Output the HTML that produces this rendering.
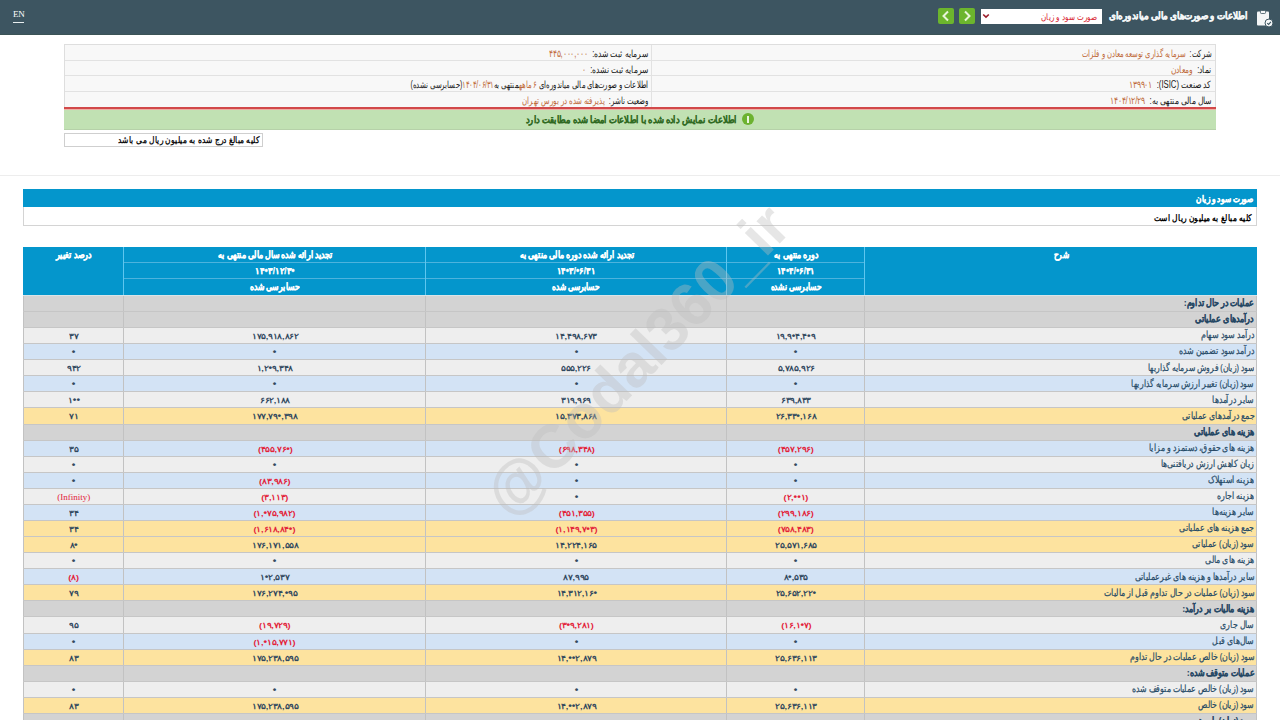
<!DOCTYPE html>
<html lang="fa">
<head>
<meta charset="utf-8">
<style>
*{box-sizing:border-box;margin:0;padding:0}
html,body{width:1280px;height:720px;overflow:hidden;background:#fff;font-family:"Liberation Sans",sans-serif;}
.t{display:inline-block;white-space:nowrap;direction:rtl}
.ar{position:absolute;transform-origin:100% 50%}
#hdr{position:absolute;left:0;top:0;width:1280px;height:35px;background:#3d5561;border-bottom:1px solid #3b5356}
#en{position:absolute;left:13px;top:8.5px;font-family:"Liberation Serif",serif;font-size:9px;color:#fff;line-height:11px;letter-spacing:-0.3px}
#enl{position:absolute;left:13px;top:22px;width:11px;height:1px;background:#e8eef0}
#T_title{right:31.6px;top:8.5px;font-size:10px;font-weight:bold;color:#f4f6f7;-webkit-text-stroke:0.35px #f4f6f7;line-height:14px;transform:scaleX(0.8816)}
#sel{position:absolute;left:981px;top:9px;width:121px;height:15px;background:#fff}
#T_sel{right:182.8px;top:9.5px;font-size:9px;color:#d8202c;line-height:15px;transform:scaleX(0.8041)}
.btn{position:absolute;top:8px;width:16px;height:16px;background:#6cb52d;border-radius:2px}
.btn svg{position:absolute;left:0;top:0}
#info{position:absolute;left:64px;top:44.3px;width:1152px;height:62.9px;background:#f8f8f8;border:1px solid #dedede;border-bottom:none}
.irow{position:absolute;left:0;width:1150px;height:15.5px;border-bottom:1px solid #e2e2e2}
.it{font-size:10px;color:#1a1a1a;line-height:14px}
.it span{color:#bf6a3a}
.it .v{margin-right:3px}
#redl{position:absolute;left:64px;top:107px;width:1152px;height:2px;background:#d2494a}
#pinkl{position:absolute;left:64px;top:109px;width:1152px;height:1px;background:#eeb1a6}
#green{position:absolute;left:64px;top:110px;width:1152px;height:19.5px;background:#c1e1b3;border-bottom:1px solid #b6d1a9}
#T_green{right:543px;top:112.5px;font-size:10px;font-weight:bold;color:#2f6a22;-webkit-text-stroke:0.15px #2f6a22;line-height:14px;transform:scaleX(0.8406)}
#gico{position:absolute;left:742px;top:113px;width:12px;height:12px;border-radius:50%;background:#6cb230}
#gico:after{content:"";position:absolute;left:5px;top:3px;width:2px;height:7px;background:#eaf5df}
#note{position:absolute;left:64px;top:133px;width:199px;height:14px;border:1px solid #cfcfcf}
#T_note{right:1020.8px;top:134px;font-size:9px;font-weight:bold;color:#111;line-height:13px;transform:scaleX(0.8342)}
#hr{position:absolute;left:0;top:175px;width:1280px;height:1px;background:#ededed}
#sech{position:absolute;left:23px;top:189px;width:1234px;height:18px;background:#0496cc}
#T_sech{right:26.6px;top:192.5px;font-size:9px;font-weight:bold;color:#fff;-webkit-text-stroke:0.35px #fff;line-height:13px;transform:scaleX(0.8140)}
#secw{position:absolute;left:23px;top:207px;width:1234px;height:19px;background:#fff;border:1px solid #d4d4d4;border-top:none}
#T_secw{right:28px;top:210.5px;font-size:9px;font-weight:bold;color:#000;line-height:14px;transform:scaleX(0.8339)}
#mt{position:absolute;left:23px;top:247.3px;width:1234px;}
#th{position:relative;height:48.6px;border-bottom:1.2px solid #d8e4e8;background:#0496cc;color:#fff;font-weight:bold;font-size:10px}
.hc{position:absolute;top:0;height:47.4px;border-left:1px solid #5ec6ef}
.hs{position:absolute;left:0;width:100%;height:15.8px;line-height:15px;text-align:center;border-bottom:1px solid #4db3dd}
.hs .t{transform-origin:50% 50%;-webkit-text-stroke:0.25px #fff}
.hs .dg{font-size:8.5px;direction:ltr}
.z2{font-style:normal;font-size:10px}
.r{display:flex;flex-direction:row-reverse;height:16.08px;border-bottom:1px solid #c6c6c6}
.c{height:100%;border-left:1px solid #c2c2c2;font-size:10px;line-height:15px;text-align:center;color:#2c4a63;white-space:nowrap;overflow:hidden}
.c .t{transform-origin:50% 50%}
.c1{width:100.3px}.c2{width:302.1px}.c3{width:300.9px}.c4{width:138.1px}.c5{width:392.6px;text-align:right;padding-right:2px;border-right:1px solid #c2c2c2}
.c5 .t{transform-origin:100% 50%}
.lab{font-size:9.5px;color:#264a66;-webkit-text-stroke:0.2px #264a66;position:relative;top:-0.7px}
.num{font-size:8px;font-weight:bold;direction:ltr;color:#31485e}
.z{font-style:normal;font-size:9px;font-weight:bold}
.g{background:#d3d3d3}.g .lab{font-weight:bold;color:#1f405e}
.l{background:#eeeeee}
.b{background:#d3e3f5}
.y{background:#fde39f}
.neg,.neg .num{color:#e3223a}
.inf .num{color:#e3223a;font-family:"Liberation Serif",serif;font-size:9px;font-weight:normal}
#wm{position:absolute;left:637.4px;top:359.7px;width:0;height:0}
#wm span{position:absolute;left:0;top:0;font-size:61px;font-weight:bold;color:rgba(190,190,190,0.38);transform:translate(-50%,-50%) rotate(-45.8deg);white-space:nowrap;font-family:"Liberation Sans",sans-serif;pointer-events:none}
</style>
</head>
<body>
<div id="hdr">
  <div id="en">EN</div><div id="enl"></div>
  <div class="btn" style="left:938px"><svg width="16" height="16" viewBox="0 0 16 16"><path d="M10 3.5 L5.5 8 L10 12.5" fill="none" stroke="#e8f5d8" stroke-width="2"/></svg></div>
  <div class="btn" style="left:959px"><svg width="16" height="16" viewBox="0 0 16 16"><path d="M6 3.5 L10.5 8 L6 12.5" fill="none" stroke="#e8f5d8" stroke-width="2"/></svg></div>
  <div id="sel"><svg style="position:absolute;left:1px;top:4px" width="8" height="6" viewBox="0 0 8 6"><path d="M1.2 1.5 L4 4.2 L6.8 1.5" fill="none" stroke="#9a1c2a" stroke-width="1.6"/></svg></div>
  <span class="t ar" id="T_sel">صورت سود و زیان</span>
  <span class="t ar" id="T_title">اطلاعات و صورت‌های مالی میاندوره‌ای</span>
  <svg style="position:absolute;left:1256px;top:9px" width="18" height="18" viewBox="0 0 18 18">
    <rect x="1" y="2.5" width="12" height="14" rx="1" fill="#f4f6f7"/>
    <rect x="4.5" y="1.5" width="5" height="3" rx="0.8" fill="#f4f6f7" stroke="#3d5561" stroke-width="0.8"/>
    <circle cx="13" cy="14" r="4" fill="#f4f6f7" stroke="#3d5561" stroke-width="1"/>
    <path d="M11.2 14.2 L12.6 15.4 L14.9 12.8" fill="none" stroke="#3d5561" stroke-width="1.1"/>
  </svg>
</div>
<div id="info">
  <div class="irow" style="top:0"></div>
  <div class="irow" style="top:15.3px"></div>
  <div class="irow" style="top:31.2px"></div>
  <div style="position:absolute;left:586px;top:0;width:1px;height:62px;background:#e2e2e2"></div>
</div>
<span class="t ar it" id="T_i1" style="right:68.1px;top:47px;transform:scaleX(0.6876)">شرکت: <span class="v">سرمایه گذاری توسعه معادن و فلزات</span></span>
<span class="t ar it" id="T_i2" style="right:68px;top:62.5px;transform:scaleX(0.7580)">نماد: <span class="v">ومعادن</span></span>
<span class="t ar it" id="T_i3" style="right:68.7px;top:78px;transform:scaleX(0.7747)">کد صنعت (ISIC): <span class="v">۱۳۹۹۰۱</span></span>
<span class="t ar it" id="T_i4" style="right:68.7px;top:93.5px;transform:scaleX(0.7720)">سال مالی منتهی به: <span class="v">۱۴۰۴/۱۲/۲۹</span></span>
<span class="t ar it" id="T_i5" style="right:632px;top:47px;transform:scaleX(0.7662)">سرمایه ثبت شده: <span class="v">۴۴۵,۰۰۰,۰۰۰</span></span>
<span class="t ar it" id="T_i6" style="right:632px;top:62.5px;transform:scaleX(0.7575)">سرمایه ثبت نشده: <span class="v">۰</span></span>
<span class="t ar it" id="T_i7" style="right:632px;top:78px;transform:scaleX(0.6949)">اطلاعات و صورت‌های مالی میاندوره‌ای <span>۶ ماهه</span>منتهی به<span>۱۴۰۴/۰۶/۳۱</span>(حسابرسی نشده)</span>
<span class="t ar it" id="T_i8" style="right:632px;top:93.5px;transform:scaleX(0.7021)">وضعیت ناشر: <span class="v">پذیرفته شده در بورس تهران</span></span>
<div id="redl"></div><div id="pinkl"></div>
<div id="green"></div>
<span class="t ar" id="T_green">اطلاعات نمایش داده شده با اطلاعات امضا شده مطابقت دارد</span>
<div id="gico"></div>
<div id="note"></div>
<span class="t ar" id="T_note">کلیه مبالغ درج شده به میلیون ریال می باشد</span>
<div id="hr"></div>
<div id="sech"></div>
<span class="t ar" id="T_sech">صورت سود و زیان</span>
<div id="secw"></div>
<span class="t ar" id="T_secw">کلیه مبالغ به میلیون ریال است</span>
<div id="mt">
  <div id="th">
    <div class="hc" style="left:0;width:100.3px;border-left:none"><div class="hs" style="top:0;border:none"><span class="t" id="H_c1" style="transform:scaleX(0.7927)">درصد تغییر</span></div></div>
    <div class="hc" style="left:100.3px;width:302.1px"><div class="hs" style="top:0"><span class="t" id="H_c2a" style="transform:scaleX(0.7901)">تجدید ارائه شده سال مالی منتهی به</span></div><div class="hs" style="top:15.8px"><span class="t dg" id="H_c2b" style="transform:scaleX(0.9434)">۱۴<i class="z2">•</i>۳/۱۲/۳<i class="z2">•</i></span></div><div class="hs" style="top:31.6px;border:none"><span class="t" id="H_c2c" style="transform:scaleX(0.7714)">حسابرسی شده</span></div></div>
    <div class="hc" style="left:402.4px;width:300.9px"><div class="hs" style="top:0"><span class="t" id="H_c3a" style="transform:scaleX(0.7840)">تجدید ارائه شده دوره مالی منتهی به</span></div><div class="hs" style="top:15.8px"><span class="t dg" id="H_c3b" style="transform:scaleX(0.9239)">۱۴<i class="z2">•</i>۳/<i class="z2">•</i>۶/۳۱</span></div><div class="hs" style="top:31.6px;border:none"><span class="t" id="H_c3c" style="transform:scaleX(0.7447)">حسابرسی شده</span></div></div>
    <div class="hc" style="left:703.3px;width:138.1px"><div class="hs" style="top:0"><span class="t" id="H_c4a" style="transform:scaleX(0.7779)">دوره منتهی به</span></div><div class="hs" style="top:15.8px"><span class="t dg" id="H_c4b" style="transform:scaleX(0.9191)">۱۴<i class="z2">•</i>۴/<i class="z2">•</i>۶/۳۱</span></div><div class="hs" style="top:31.6px;border:none"><span class="t" id="H_c4c" style="transform:scaleX(0.7465)">حسابرسی نشده</span></div></div>
    <div class="hc" style="left:841.4px;width:392.6px"><div class="hs" style="top:0;border:none"><span class="t" id="H_c5" style="transform:scaleX(0.7500)">شرح</span></div></div>
  </div>
<div class="r g"><div class="c c5"><span class="t lab" id="L0" style="transform:scaleX(0.7946)">عملیات در حال تداوم:</span></div><div class="c c4"></div><div class="c c3"></div><div class="c c2"></div><div class="c c1"></div></div>
<div class="r g"><div class="c c5"><span class="t lab" id="L1" style="transform:scaleX(0.8040)">درآمدهای عملیاتی</span></div><div class="c c4"></div><div class="c c3"></div><div class="c c2"></div><div class="c c1"></div></div>
<div class="r l"><div class="c c5"><span class="t lab" id="L2" style="transform:scaleX(0.7996)">درآمد سود سهام</span></div><div class="c c4"><span class="t num" id="N2_0" style="transform:scaleX(1.1383)">۱۹,۹<i class="z">•</i>۴,۴<i class="z">•</i>۹</span></div><div class="c c3"><span class="t num" id="N2_1" style="transform:scaleX(1.1383)">۱۴,۴۹۸,۶۷۳</span></div><div class="c c2"><span class="t num" id="N2_2" style="transform:scaleX(1.1383)">۱۷۵,۹۱۸,۸۶۲</span></div><div class="c c1"><span class="t num" id="N2_3" style="transform:scaleX(1.1383)">۳۷</span></div></div>
<div class="r b"><div class="c c5"><span class="t lab" id="L3" style="transform:scaleX(0.7953)">درآمد سود تضمین شده</span></div><div class="c c4"><span class="t num" id="N3_0" style="transform:scaleX(1.1383)"><i class="z">•</i></span></div><div class="c c3"><span class="t num" id="N3_1" style="transform:scaleX(1.1383)"><i class="z">•</i></span></div><div class="c c2"><span class="t num" id="N3_2" style="transform:scaleX(1.1383)"><i class="z">•</i></span></div><div class="c c1"><span class="t num" id="N3_3" style="transform:scaleX(1.1383)"><i class="z">•</i></span></div></div>
<div class="r l"><div class="c c5"><span class="t lab" id="L4" style="transform:scaleX(0.7632)">سود (زیان) فروش سرمایه گذاریها</span></div><div class="c c4"><span class="t num" id="N4_0" style="transform:scaleX(1.1383)">۵,۷۸۵,۹۲۶</span></div><div class="c c3"><span class="t num" id="N4_1" style="transform:scaleX(1.1383)">۵۵۵,۲۲۶</span></div><div class="c c2"><span class="t num" id="N4_2" style="transform:scaleX(1.1383)">۱,۲<i class="z">•</i>۹,۳۴۸</span></div><div class="c c1"><span class="t num" id="N4_3" style="transform:scaleX(1.1383)">۹۴۲</span></div></div>
<div class="r b"><div class="c c5"><span class="t lab" id="L5" style="transform:scaleX(0.7715)">سود (زیان) تغییر ارزش سرمایه گذاریها</span></div><div class="c c4"><span class="t num" id="N5_0" style="transform:scaleX(1.1383)"><i class="z">•</i></span></div><div class="c c3"><span class="t num" id="N5_1" style="transform:scaleX(1.1383)"><i class="z">•</i></span></div><div class="c c2"><span class="t num" id="N5_2" style="transform:scaleX(1.1383)"><i class="z">•</i></span></div><div class="c c1"><span class="t num" id="N5_3" style="transform:scaleX(1.1383)"><i class="z">•</i></span></div></div>
<div class="r l"><div class="c c5"><span class="t lab" id="L6" style="transform:scaleX(0.7844)">سایر درآمدها</span></div><div class="c c4"><span class="t num" id="N6_0" style="transform:scaleX(1.1383)">۶۳۹,۸۳۳</span></div><div class="c c3"><span class="t num" id="N6_1" style="transform:scaleX(1.1383)">۳۱۹,۹۶۹</span></div><div class="c c2"><span class="t num" id="N6_2" style="transform:scaleX(1.1383)">۶۶۲,۱۸۸</span></div><div class="c c1"><span class="t num" id="N6_3" style="transform:scaleX(1.1383)">۱<i class="z">•</i><i class="z">•</i></span></div></div>
<div class="r y"><div class="c c5"><span class="t lab" id="L7" style="transform:scaleX(0.7844)">جمع درآمدهای عملیاتی</span></div><div class="c c4"><span class="t num" id="N7_0" style="transform:scaleX(1.1383)">۲۶,۳۳<i class="z">•</i>,۱۶۸</span></div><div class="c c3"><span class="t num" id="N7_1" style="transform:scaleX(1.1383)">۱۵,۳۷۳,۸۶۸</span></div><div class="c c2"><span class="t num" id="N7_2" style="transform:scaleX(1.1383)">۱۷۷,۷۹<i class="z">•</i>,۳۹۸</span></div><div class="c c1"><span class="t num" id="N7_3" style="transform:scaleX(1.1383)">۷۱</span></div></div>
<div class="r g"><div class="c c5"><span class="t lab" id="L8" style="transform:scaleX(0.7981)">هزینه های عملیاتی</span></div><div class="c c4"></div><div class="c c3"></div><div class="c c2"></div><div class="c c1"></div></div>
<div class="r b"><div class="c c5"><span class="t lab" id="L9" style="transform:scaleX(0.7844)">هزینه های حقوق، دستمزد و مزایا</span></div><div class="c c4 neg"><span class="t num" id="N9_0" style="transform:scaleX(1.1383)">(۴۵۷,۲۹۶)</span></div><div class="c c3 neg"><span class="t num" id="N9_1" style="transform:scaleX(1.1383)">(۶۹۸,۳۴۸)</span></div><div class="c c2 neg"><span class="t num" id="N9_2" style="transform:scaleX(1.1383)">(۴۵۵,۷۶<i class="z">•</i>)</span></div><div class="c c1"><span class="t num" id="N9_3" style="transform:scaleX(1.1383)">۳۵</span></div></div>
<div class="r l"><div class="c c5"><span class="t lab" id="L10" style="transform:scaleX(0.7844)">زیان کاهش ارزش دریافتنی‌ها</span></div><div class="c c4"><span class="t num" id="N10_0" style="transform:scaleX(1.1383)"><i class="z">•</i></span></div><div class="c c3"><span class="t num" id="N10_1" style="transform:scaleX(1.1383)"><i class="z">•</i></span></div><div class="c c2"><span class="t num" id="N10_2" style="transform:scaleX(1.1383)"><i class="z">•</i></span></div><div class="c c1"><span class="t num" id="N10_3" style="transform:scaleX(1.1383)"><i class="z">•</i></span></div></div>
<div class="r b"><div class="c c5"><span class="t lab" id="L11" style="transform:scaleX(0.7844)">هزینه استهلاک</span></div><div class="c c4"><span class="t num" id="N11_0" style="transform:scaleX(1.1383)"><i class="z">•</i></span></div><div class="c c3"><span class="t num" id="N11_1" style="transform:scaleX(1.1383)"><i class="z">•</i></span></div><div class="c c2 neg"><span class="t num" id="N11_2" style="transform:scaleX(1.1383)">(۸۳,۹۸۶)</span></div><div class="c c1"><span class="t num" id="N11_3" style="transform:scaleX(1.1383)"><i class="z">•</i></span></div></div>
<div class="r l"><div class="c c5"><span class="t lab" id="L12" style="transform:scaleX(0.7844)">هزینه اجاره</span></div><div class="c c4 neg"><span class="t num" id="N12_0" style="transform:scaleX(1.1383)">(۲,<i class="z">•</i><i class="z">•</i>۱)</span></div><div class="c c3"><span class="t num" id="N12_1" style="transform:scaleX(1.1383)"><i class="z">•</i></span></div><div class="c c2 neg"><span class="t num" id="N12_2" style="transform:scaleX(1.1383)">(۳,۱۱۳)</span></div><div class="c c1 inf"><span class="t num" id="N12_3" style="transform:scaleX(1.0000)">(Infinity)</span></div></div>
<div class="r b"><div class="c c5"><span class="t lab" id="L13" style="transform:scaleX(0.7844)">سایر هزینه‌ها</span></div><div class="c c4 neg"><span class="t num" id="N13_0" style="transform:scaleX(1.1383)">(۲۹۹,۱۸۶)</span></div><div class="c c3 neg"><span class="t num" id="N13_1" style="transform:scaleX(1.1383)">(۴۵۱,۳۵۵)</span></div><div class="c c2 neg"><span class="t num" id="N13_2" style="transform:scaleX(1.1383)">(۱,<i class="z">•</i>۷۵,۹۸۲)</span></div><div class="c c1"><span class="t num" id="N13_3" style="transform:scaleX(1.1383)">۳۴</span></div></div>
<div class="r y"><div class="c c5"><span class="t lab" id="L14" style="transform:scaleX(0.7844)">جمع هزینه های عملیاتی</span></div><div class="c c4 neg"><span class="t num" id="N14_0" style="transform:scaleX(1.1383)">(۷۵۸,۴۸۳)</span></div><div class="c c3 neg"><span class="t num" id="N14_1" style="transform:scaleX(1.1383)">(۱,۱۴۹,۷<i class="z">•</i>۳)</span></div><div class="c c2 neg"><span class="t num" id="N14_2" style="transform:scaleX(1.1383)">(۱,۶۱۸,۸۴<i class="z">•</i>)</span></div><div class="c c1"><span class="t num" id="N14_3" style="transform:scaleX(1.1383)">۳۴</span></div></div>
<div class="r y"><div class="c c5"><span class="t lab" id="L15" style="transform:scaleX(0.7844)">سود (زیان) عملیاتی</span></div><div class="c c4"><span class="t num" id="N15_0" style="transform:scaleX(1.1383)">۲۵,۵۷۱,۶۸۵</span></div><div class="c c3"><span class="t num" id="N15_1" style="transform:scaleX(1.1383)">۱۴,۲۲۴,۱۶۵</span></div><div class="c c2"><span class="t num" id="N15_2" style="transform:scaleX(1.1383)">۱۷۶,۱۷۱,۵۵۸</span></div><div class="c c1"><span class="t num" id="N15_3" style="transform:scaleX(1.1383)">۸<i class="z">•</i></span></div></div>
<div class="r l"><div class="c c5"><span class="t lab" id="L16" style="transform:scaleX(0.7844)">هزینه های مالی</span></div><div class="c c4"><span class="t num" id="N16_0" style="transform:scaleX(1.1383)"><i class="z">•</i></span></div><div class="c c3"><span class="t num" id="N16_1" style="transform:scaleX(1.1383)"><i class="z">•</i></span></div><div class="c c2"><span class="t num" id="N16_2" style="transform:scaleX(1.1383)"><i class="z">•</i></span></div><div class="c c1"><span class="t num" id="N16_3" style="transform:scaleX(1.1383)"><i class="z">•</i></span></div></div>
<div class="r b"><div class="c c5"><span class="t lab" id="L17" style="transform:scaleX(0.7844)">سایر درآمدها و هزینه های غیرعملیاتی</span></div><div class="c c4"><span class="t num" id="N17_0" style="transform:scaleX(1.1383)">۸<i class="z">•</i>,۵۳۵</span></div><div class="c c3"><span class="t num" id="N17_1" style="transform:scaleX(1.1383)">۸۷,۹۹۵</span></div><div class="c c2"><span class="t num" id="N17_2" style="transform:scaleX(1.1383)">۱<i class="z">•</i>۲,۵۳۷</span></div><div class="c c1 neg"><span class="t num" id="N17_3" style="transform:scaleX(1.1383)">(۸)</span></div></div>
<div class="r y"><div class="c c5"><span class="t lab" id="L18" style="transform:scaleX(0.7923)">سود (زیان) عملیات در حال تداوم قبل از مالیات</span></div><div class="c c4"><span class="t num" id="N18_0" style="transform:scaleX(1.1383)">۲۵,۶۵۲,۲۲<i class="z">•</i></span></div><div class="c c3"><span class="t num" id="N18_1" style="transform:scaleX(1.1383)">۱۴,۳۱۲,۱۶<i class="z">•</i></span></div><div class="c c2"><span class="t num" id="N18_2" style="transform:scaleX(1.1383)">۱۷۶,۲۷۴,<i class="z">•</i>۹۵</span></div><div class="c c1"><span class="t num" id="N18_3" style="transform:scaleX(1.1383)">۷۹</span></div></div>
<div class="r g"><div class="c c5"><span class="t lab" id="L19" style="transform:scaleX(0.7958)">هزینه مالیات بر درآمد:</span></div><div class="c c4"></div><div class="c c3"></div><div class="c c2"></div><div class="c c1"></div></div>
<div class="r l"><div class="c c5"><span class="t lab" id="L20" style="transform:scaleX(0.7844)">سال جاری</span></div><div class="c c4 neg"><span class="t num" id="N20_0" style="transform:scaleX(1.1383)">(۱۶,۱<i class="z">•</i>۷)</span></div><div class="c c3 neg"><span class="t num" id="N20_1" style="transform:scaleX(1.1383)">(۳<i class="z">•</i>۹,۲۸۱)</span></div><div class="c c2 neg"><span class="t num" id="N20_2" style="transform:scaleX(1.1383)">(۱۹,۷۲۹)</span></div><div class="c c1"><span class="t num" id="N20_3" style="transform:scaleX(1.1383)">۹۵</span></div></div>
<div class="r b"><div class="c c5"><span class="t lab" id="L21" style="transform:scaleX(0.7844)">سال‌های قبل</span></div><div class="c c4"><span class="t num" id="N21_0" style="transform:scaleX(1.1383)"><i class="z">•</i></span></div><div class="c c3"><span class="t num" id="N21_1" style="transform:scaleX(1.1383)"><i class="z">•</i></span></div><div class="c c2 neg"><span class="t num" id="N21_2" style="transform:scaleX(1.1383)">(۱,<i class="z">•</i>۱۵,۷۷۱)</span></div><div class="c c1"><span class="t num" id="N21_3" style="transform:scaleX(1.1383)"><i class="z">•</i></span></div></div>
<div class="r y"><div class="c c5"><span class="t lab" id="L22" style="transform:scaleX(0.7844)">سود (زیان) خالص عملیات در حال تداوم</span></div><div class="c c4"><span class="t num" id="N22_0" style="transform:scaleX(1.1383)">۲۵,۶۳۶,۱۱۳</span></div><div class="c c3"><span class="t num" id="N22_1" style="transform:scaleX(1.1383)">۱۴,<i class="z">•</i><i class="z">•</i>۲,۸۷۹</span></div><div class="c c2"><span class="t num" id="N22_2" style="transform:scaleX(1.1383)">۱۷۵,۲۳۸,۵۹۵</span></div><div class="c c1"><span class="t num" id="N22_3" style="transform:scaleX(1.1383)">۸۳</span></div></div>
<div class="r g"><div class="c c5"><span class="t lab" id="L23" style="transform:scaleX(0.7981)">عملیات متوقف شده:</span></div><div class="c c4"></div><div class="c c3"></div><div class="c c2"></div><div class="c c1"></div></div>
<div class="r l"><div class="c c5"><span class="t lab" id="L24" style="transform:scaleX(0.7844)">سود (زیان) خالص عملیات متوقف شده</span></div><div class="c c4"><span class="t num" id="N24_0" style="transform:scaleX(1.1383)"><i class="z">•</i></span></div><div class="c c3"><span class="t num" id="N24_1" style="transform:scaleX(1.1383)"><i class="z">•</i></span></div><div class="c c2"><span class="t num" id="N24_2" style="transform:scaleX(1.1383)"><i class="z">•</i></span></div><div class="c c1"><span class="t num" id="N24_3" style="transform:scaleX(1.1383)"><i class="z">•</i></span></div></div>
<div class="r y"><div class="c c5"><span class="t lab" id="L25" style="transform:scaleX(0.7844)">سود (زیان) خالص</span></div><div class="c c4"><span class="t num" id="N25_0" style="transform:scaleX(1.1383)">۲۵,۶۳۶,۱۱۳</span></div><div class="c c3"><span class="t num" id="N25_1" style="transform:scaleX(1.1383)">۱۴,<i class="z">•</i><i class="z">•</i>۲,۸۷۹</span></div><div class="c c2"><span class="t num" id="N25_2" style="transform:scaleX(1.1383)">۱۷۵,۲۳۸,۵۹۵</span></div><div class="c c1"><span class="t num" id="N25_3" style="transform:scaleX(1.1383)">۸۳</span></div></div>
<div class="r g"><div class="c c5"><span class="t lab" id="L26" style="transform:scaleX(0.7981)">سود (زیان) پایه هر سهم</span></div><div class="c c4"></div><div class="c c3"></div><div class="c c2"></div><div class="c c1"></div></div>
</div>
<div id="wm"><span>@Codal360_ir</span></div>
</body>
</html>
